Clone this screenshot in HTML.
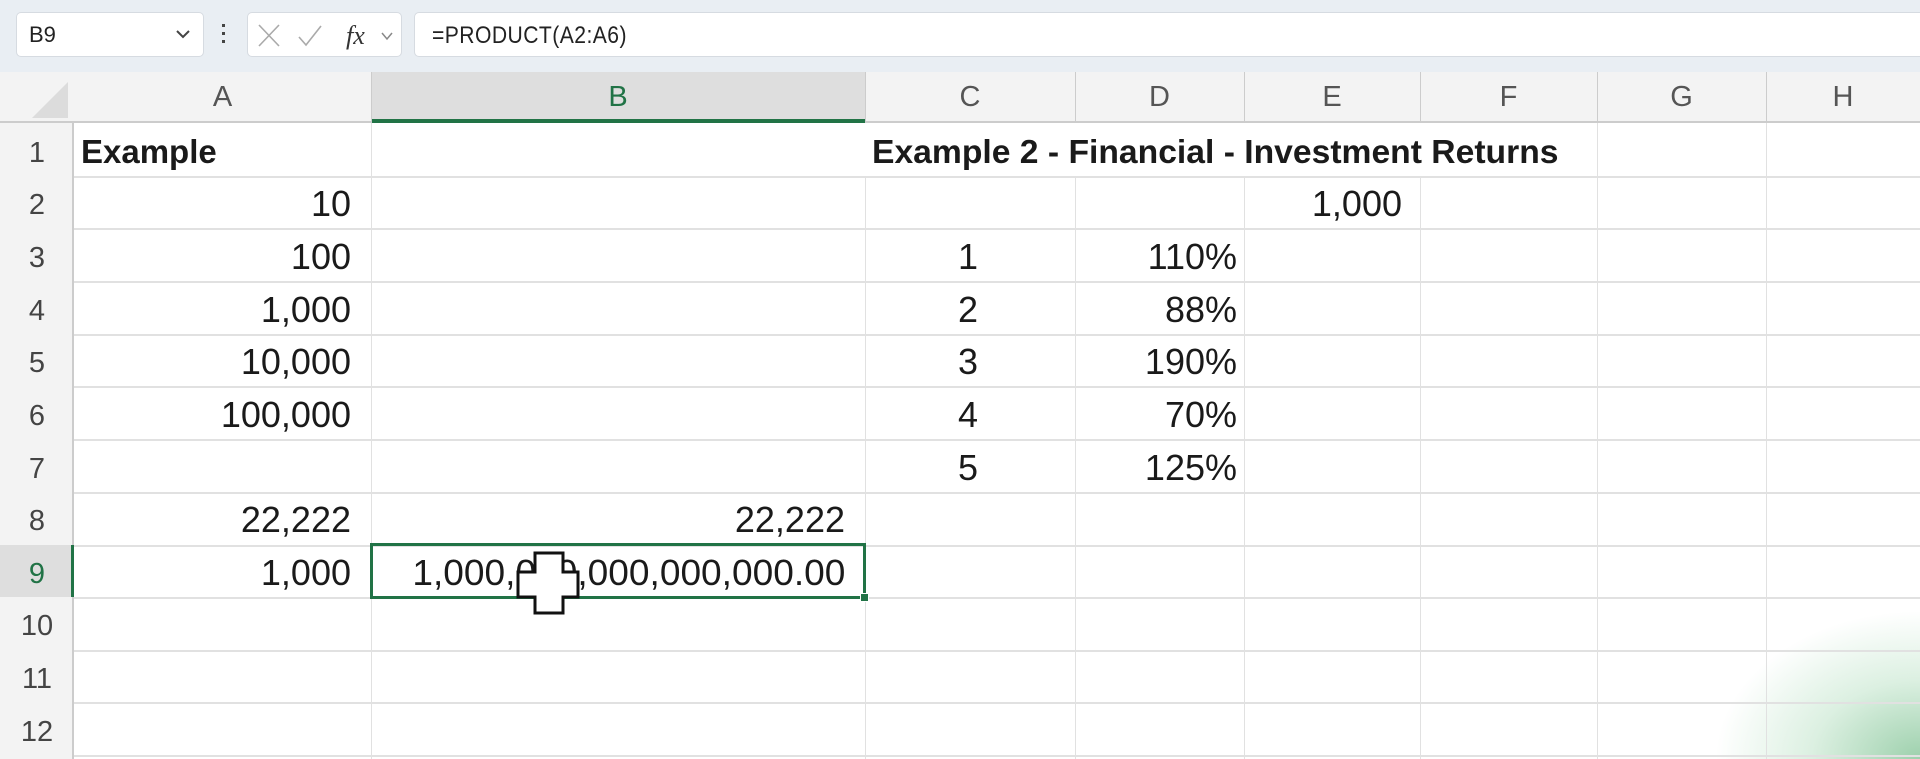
<!DOCTYPE html>
<html><head><meta charset="utf-8"><style>
*{margin:0;padding:0;box-sizing:border-box}
body{width:1920px;height:759px;overflow:hidden;background:#fff;font-family:"Liberation Sans",sans-serif;position:relative}
.a{position:absolute}
.tb{left:0;top:0;width:1920px;height:72px;background:#e9eef3}
.box{background:#fff;border:1px solid #d6dbe1;border-radius:5px}
.hl{background:#e1e1e1}
.vl{width:1px;background:#e1e1e1}
.c{position:absolute;font-size:36px;color:#1a1a1a;line-height:52px;white-space:nowrap}
.r{text-align:right}
.hd{position:absolute;font-size:29px;color:#555;line-height:51px;text-align:center}
.rn{position:absolute;left:0;width:74px;font-size:29px;color:#444;line-height:52px;text-align:center}
</style></head><body>
<div class="a tb"></div>
<div class="a box" style="left:16px;top:12px;width:188px;height:45px"></div>
<div class="a" style="left:29px;top:22px;font-size:22px;color:#222">B9</div>
<svg class="a" style="left:174px;top:28px" width="18" height="12"><path d="M3 3 L9 9 L15 3" stroke="#444" stroke-width="2" fill="none"/></svg>
<div class="a" style="left:222px;top:24px;width:3px;height:3px;background:#444;box-shadow:0 8px 0 #444,0 16px 0 #444"></div>
<div class="a box" style="left:247px;top:12px;width:155px;height:45px"></div>
<svg class="a" style="left:256px;top:22px" width="146" height="28"><path d="M3 3 L23 24 M23 3 L3 24" stroke="#aaa" stroke-width="1.6"/><path d="M43 15 L50 23 L65 4" stroke="#aaa" stroke-width="1.6" fill="none"/><text x="90" y="22" font-family="Liberation Serif" font-style="italic" font-size="26" fill="#333">fx</text><path d="M126 11 L131 17 L136 11" stroke="#888" stroke-width="1.5" fill="none"/></svg>
<div class="a box" style="left:414px;top:12px;width:1520px;height:45px"></div>
<div class="a" style="left:432px;top:22px;font-size:24px;color:#222;letter-spacing:0.5px;transform:scaleX(.88);transform-origin:left">=PRODUCT(A2:A6)</div>

<div class="a" style="left:0;top:72px;width:1920px;height:51px;background:#f3f3f3;border-bottom:2px solid #ccc"></div>
<div class="a" style="left:0;top:123px;width:74px;height:636px;background:#f3f3f3;border-right:2px solid #ccc"></div>
<svg class="a" style="left:30px;top:80px" width="40" height="40"><path d="M38 2 L38 38 L2 38 Z" fill="#dcdcdc"/></svg>
<div class="a" style="left:371px;top:72px;width:494px;height:51px;background:#dedede;border-bottom:4px solid #217346"></div>
<div class="a" style="left:0;top:545px;width:74px;height:52px;background:#dedede;border-right:3px solid #217346"></div>

<div class="hd" style="left:74px;top:72px;width:297px">A</div>
<div class="hd" style="left:371px;top:72px;width:494px;color:#217346">B</div>
<div class="hd" style="left:865px;top:72px;width:210px">C</div>
<div class="hd" style="left:1075px;top:72px;width:169px">D</div>
<div class="hd" style="left:1244px;top:72px;width:176px">E</div>
<div class="hd" style="left:1420px;top:72px;width:177px">F</div>
<div class="hd" style="left:1597px;top:72px;width:169px">G</div>
<div class="hd" style="left:1766px;top:72px;width:154px">H</div>
<div class="a vl" style="left:371px;top:72px;height:51px;background:#ccc"></div>
<div class="a vl" style="left:865px;top:72px;height:51px;background:#ccc"></div>
<div class="a vl" style="left:1075px;top:72px;height:51px;background:#ccc"></div>
<div class="a vl" style="left:1244px;top:72px;height:51px;background:#ccc"></div>
<div class="a vl" style="left:1420px;top:72px;height:51px;background:#ccc"></div>
<div class="a vl" style="left:1597px;top:72px;height:51px;background:#ccc"></div>
<div class="a vl" style="left:1766px;top:72px;height:51px;background:#ccc"></div>

<div class="a" style="left:1580px;top:540px;width:340px;height:219px;background:radial-gradient(ellipse 80% 90% at 100% 100%,rgba(140,200,158,.85) 0%,rgba(185,225,196,.5) 40%,rgba(255,255,255,0) 75%)"></div>

<div class="a vl" style="left:371px;top:123px;height:636px"></div>
<div class="a vl" style="left:865px;top:176px;height:583px"></div>
<div class="a vl" style="left:1075px;top:176px;height:583px"></div>
<div class="a vl" style="left:1244px;top:176px;height:583px"></div>
<div class="a vl" style="left:1420px;top:176px;height:583px"></div>
<div class="a vl" style="left:1597px;top:123px;height:636px"></div>
<div class="a vl" style="left:1766px;top:123px;height:636px"></div>
<div class="a hl" style="left:74px;top:176px;width:1846px;height:2px"></div>
<div class="a hl" style="left:74px;top:228px;width:1846px;height:2px"></div>
<div class="a hl" style="left:74px;top:281px;width:1846px;height:2px"></div>
<div class="a hl" style="left:74px;top:334px;width:1846px;height:2px"></div>
<div class="a hl" style="left:74px;top:386px;width:1846px;height:2px"></div>
<div class="a hl" style="left:74px;top:439px;width:1846px;height:2px"></div>
<div class="a hl" style="left:74px;top:492px;width:1846px;height:2px"></div>
<div class="a hl" style="left:74px;top:545px;width:1846px;height:2px"></div>
<div class="a hl" style="left:74px;top:597px;width:1846px;height:2px"></div>
<div class="a hl" style="left:74px;top:650px;width:1846px;height:2px"></div>
<div class="a hl" style="left:74px;top:702px;width:1846px;height:2px"></div>
<div class="a hl" style="left:74px;top:755px;width:1846px;height:2px"></div>

<div class="rn" style="top:127px">1</div>
<div class="rn" style="top:179px">2</div>
<div class="rn" style="top:232px">3</div>
<div class="rn" style="top:285px">4</div>
<div class="rn" style="top:337px">5</div>
<div class="rn" style="top:390px">6</div>
<div class="rn" style="top:443px">7</div>
<div class="rn" style="top:495px">8</div>
<div class="rn" style="top:548px;color:#217346">9</div>
<div class="rn" style="top:600px">10</div>
<div class="rn" style="top:653px">11</div>
<div class="rn" style="top:706px">12</div>

<div class="c" style="left:81px;top:126px;font-weight:bold;font-size:33px">Example</div>
<div class="c" style="left:872px;top:126px;font-weight:bold;font-size:33px;transform:scaleX(1.02);transform-origin:left">Example 2 - Financial - Investment Returns</div>

<div class="c r" style="right:1569px;top:178px">10</div>
<div class="c r" style="right:1569px;top:231px">100</div>
<div class="c r" style="right:1569px;top:284px">1,000</div>
<div class="c r" style="right:1569px;top:336px">10,000</div>
<div class="c r" style="right:1569px;top:389px">100,000</div>
<div class="c r" style="right:1569px;top:494px">22,222</div>
<div class="c r" style="right:1569px;top:547px">1,000</div>
<div class="c r" style="right:1075px;top:494px">22,222</div>
<div class="c r" style="right:1075px;top:547px;transform:scaleX(1.03);transform-origin:right">1,000,000,000,000,000.00</div>
<div class="c r" style="right:518px;top:178px">1,000</div>
<div class="c" style="left:958px;top:231px">1</div>
<div class="c" style="left:958px;top:284px">2</div>
<div class="c" style="left:958px;top:336px">3</div>
<div class="c" style="left:958px;top:389px">4</div>
<div class="c" style="left:958px;top:442px">5</div>
<div class="c r" style="right:683px;top:231px">110%</div>
<div class="c r" style="right:683px;top:284px">88%</div>
<div class="c r" style="right:683px;top:336px">190%</div>
<div class="c r" style="right:683px;top:389px">70%</div>
<div class="c r" style="right:683px;top:442px">125%</div>

<div class="a" style="left:370px;top:543px;width:496px;height:56px;border:3px solid #217346"></div>
<div class="a" style="left:860px;top:593px;width:9px;height:9px;background:#217346;border:1px solid #fff"></div>
<svg class="a" style="left:516px;top:551px" width="64" height="64"><path d="M19 2 H47 V21 H62 V46 H47 V62 H19 V46 H2 V21 H19 Z" fill="#fff" stroke="#111" stroke-width="3"/></svg>
</body></html>
